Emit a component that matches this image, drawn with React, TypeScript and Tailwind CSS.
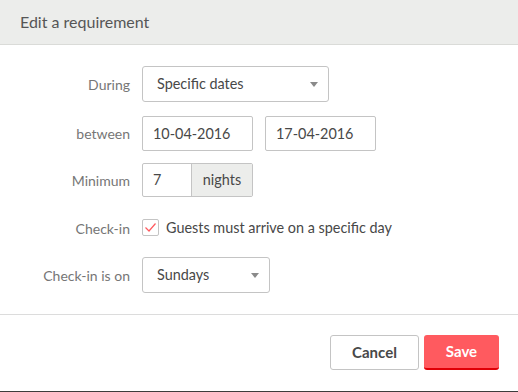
import { ReactNode } from "react";

const font = { fontFamily: '"Lato", "Liberation Sans", sans-serif' };

function Row({ label, children, className = "" }: { label: string; children: ReactNode; className?: string }) {
  return (
    <div className={`flex items-center ${className}`}>
      <div className="w-[130px] shrink-0 text-right text-[14px] text-[#767676]">{label}</div>
      <div className="ml-[12px] flex items-center">{children}</div>
    </div>
  );
}

function Select({ value, width }: { value: string; width: string }) {
  return (
    <div
      className={`flex h-[36px] ${width} items-center justify-between rounded-[3px] border border-[#c4c4c4] bg-white pl-[14px] pr-[10px] text-[14.4px] text-[#484848]`}
    >
      <span>{value}</span>
      <span className="h-0 w-0 border-x-[4px] border-t-[5px] border-x-transparent border-t-[#8a8a8a]" />
    </div>
  );
}

function TextBox({ value, className = "" }: { value: string; className?: string }) {
  return (
    <div
      className={`flex h-[35px] w-[111px] items-center rounded-[2px] border border-[#c4c4c4] bg-white pl-[10px] text-[14.4px] text-[#484848] ${className}`}
    >
      {value}
    </div>
  );
}

export default function App() {
  return (
    <div className="flex h-[392px] w-[518px] flex-col overflow-hidden bg-white" style={font}>
      <div className="flex h-[45px] shrink-0 items-center border-b border-[#dadbd8] bg-[#ecedeb] px-[20px] text-[16px] text-[#565656]">
        Edit a requirement
      </div>

      <div className="flex flex-col pt-[21px]">
        <Row label="During">
          <Select value="Specific dates" width="w-[187px]" />
        </Row>

        <Row label="between" className="mt-[14px]">
          <TextBox value="10-04-2016" />
          <TextBox value="17-04-2016" className="ml-[12px]" />
        </Row>

        <Row label="Minimum" className="mt-[12px]">
          <div className="flex h-[34px] overflow-hidden rounded-[2px] border border-[#c4c4c4]">
            <div className="flex w-[48px] items-center pl-[10px] text-[14.4px] text-[#484848]">7</div>
            <div className="flex w-[61px] items-center justify-center border-l border-[#c4c4c4] bg-[#ecedeb] text-[14.4px] text-[#484848]">
              nights
            </div>
          </div>
        </Row>

        <Row label="Check-in" className="mt-[15px] h-[32px]">
          <div className="flex h-[17px] w-[17px] items-center justify-center rounded-[2px] border border-[#c4c4c4] bg-white">
            <svg width="13" height="11" viewBox="0 0 13 11" fill="none">
              <path d="M1.5 5.5 L5 9 L11.5 1.5" stroke="#ff5a5f" strokeWidth="1.2" />
            </svg>
          </div>
          <span className="ml-[7px] text-[14.4px] text-[#484848]">Guests must arrive on a specific day</span>
        </Row>

        <Row label="Check-in is on" className="mt-[13px]">
          <Select value="Sundays" width="w-[128px]" />
        </Row>
      </div>

      <div className="mt-[21px] border-t border-[#dcdcdc]" />

      <div className="flex flex-1 items-start justify-end gap-[5px] border-b border-[#3c3c3c] pr-[19px] pt-[20px]">
        <button className="h-[35px] w-[89px] rounded-[3px] border border-[#c4c4c4] bg-white text-[15px] font-bold text-[#484848]">
          Cancel
        </button>
        <button className="h-[35px] w-[75px] rounded-[3px] border-b-2 border-[#e00007] bg-[#ff5a5f] text-[15px] font-bold text-white">
          Save
        </button>
      </div>
    </div>
  );
}
